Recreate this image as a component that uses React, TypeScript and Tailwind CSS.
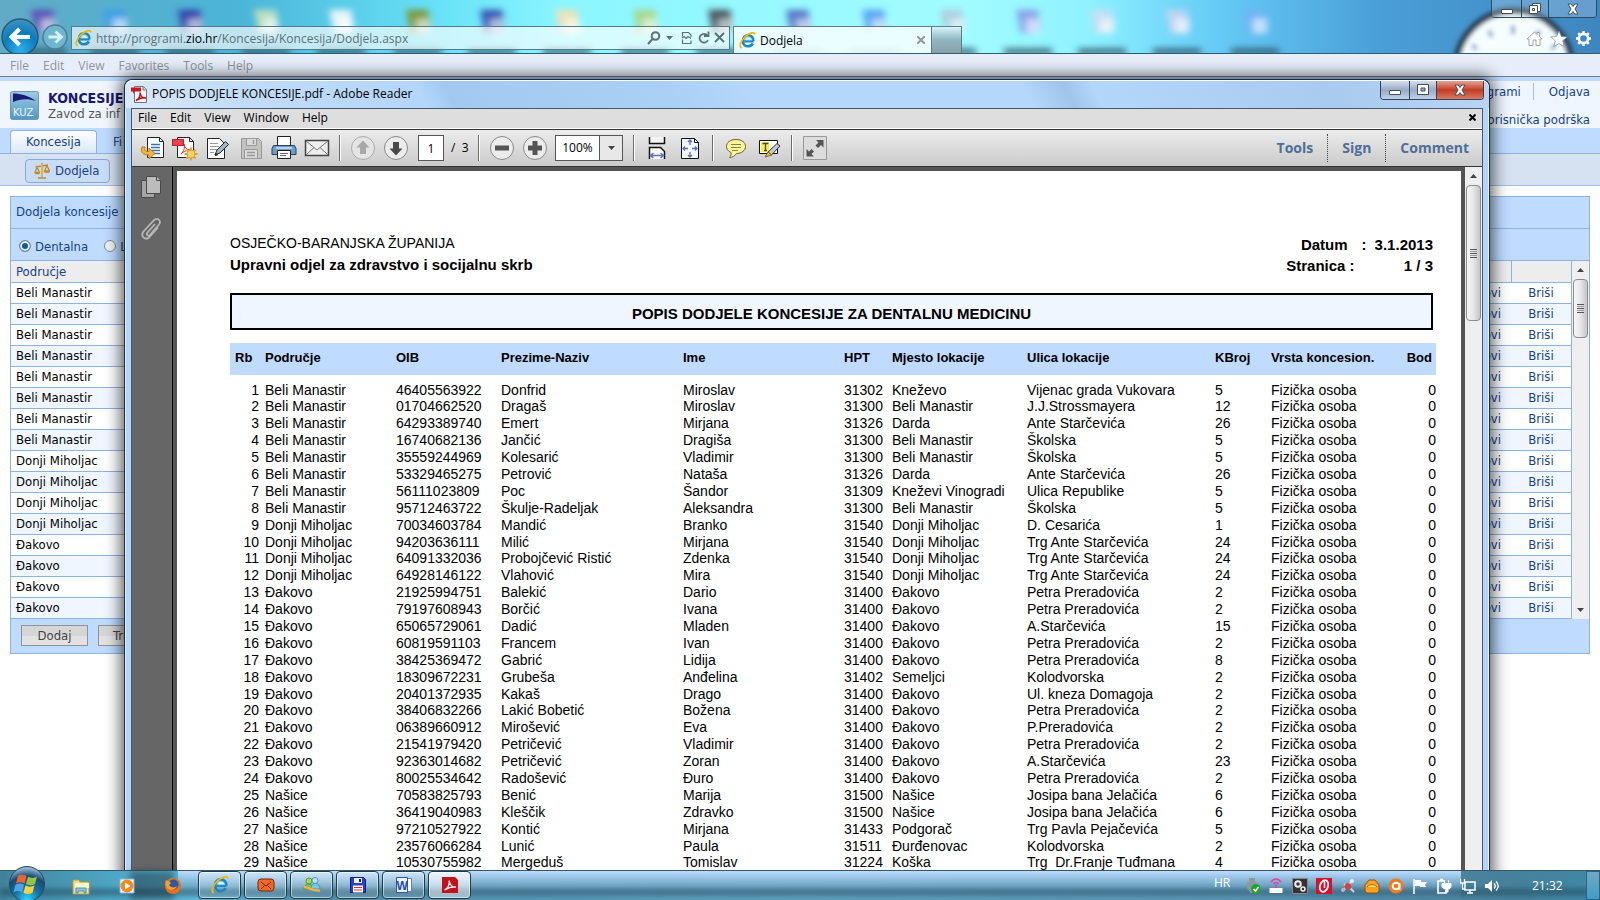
import type { ReactNode } from "react";

type Row = [string, string, string, string, string, string, string, string];

// područje, OIB, prezime, ime, HPT, mjesto, ulica, kbroj
const ROWS: Row[] = [
  ["Beli Manastir", "46405563922", "Donfrid", "Miroslav", "31302", "Kneževo", "Vijenac grada Vukovara", "5"],
  ["Beli Manastir", "01704662520", "Dragaš", "Miroslav", "31300", "Beli Manastir", "J.J.Strossmayera", "12"],
  ["Beli Manastir", "64293389740", "Emert", "Mirjana", "31326", "Darda", "Ante Starčevića", "26"],
  ["Beli Manastir", "16740682136", "Jančić", "Dragiša", "31300", "Beli Manastir", "Školska", "5"],
  ["Beli Manastir", "35559244969", "Kolesarić", "Vladimir", "31300", "Beli Manastir", "Školska", "5"],
  ["Beli Manastir", "53329465275", "Petrović", "Nataša", "31326", "Darda", "Ante Starčevića", "26"],
  ["Beli Manastir", "56111023809", "Poc", "Šandor", "31309", "Kneževi Vinogradi", "Ulica Republike", "5"],
  ["Beli Manastir", "95712463722", "Škulje-Radeljak", "Aleksandra", "31300", "Beli Manastir", "Školska", "5"],
  ["Donji Miholjac", "70034603784", "Mandić", "Branko", "31540", "Donji Miholjac", "D. Cesarića", "1"],
  ["Donji Miholjac", "94203636111", "Milić", "Mirjana", "31540", "Donji Miholjac", "Trg Ante Starčevića", "24"],
  ["Donji Miholjac", "64091332036", "Probojčević Ristić", "Zdenka", "31540", "Donji Miholjac", "Trg Ante Starčevića", "24"],
  ["Donji Miholjac", "64928146122", "Vlahović", "Mira", "31540", "Donji Miholjac", "Trg Ante Starčevića", "24"],
  ["Đakovo", "21925994751", "Balekić", "Dario", "31400", "Đakovo", "Petra Preradovića", "2"],
  ["Đakovo", "79197608943", "Borčić", "Ivana", "31400", "Đakovo", "Petra Preradovića", "2"],
  ["Đakovo", "65065729061", "Dadić", "Mladen", "31400", "Đakovo", "A.Starčevića", "15"],
  ["Đakovo", "60819591103", "Francem", "Ivan", "31400", "Đakovo", "Petra Preradovića", "2"],
  ["Đakovo", "38425369472", "Gabrić", "Lidija", "31400", "Đakovo", "Petra Preradovića", "8"],
  ["Đakovo", "18309672231", "Grubeša", "Anđelina", "31402", "Semeljci", "Kolodvorska", "2"],
  ["Đakovo", "20401372935", "Kakaš", "Drago", "31400", "Đakovo", "Ul. kneza Domagoja", "2"],
  ["Đakovo", "38406832266", "Lakić Bobetić", "Božena", "31400", "Đakovo", "Petra Preradovića", "2"],
  ["Đakovo", "06389660912", "Mirošević", "Eva", "31400", "Đakovo", "P.Preradovića", "2"],
  ["Đakovo", "21541979420", "Petričević", "Vladimir", "31400", "Đakovo", "Petra Preradovića", "2"],
  ["Đakovo", "92363014682", "Petričević", "Zoran", "31400", "Đakovo", "A.Starčevića", "23"],
  ["Đakovo", "80025534642", "Radošević", "Đuro", "31400", "Đakovo", "Petra Preradovića", "2"],
  ["Našice", "70583825793", "Benić", "Marija", "31500", "Našice", "Josipa bana Jelačića", "6"],
  ["Našice", "36419040983", "Kleščik", "Zdravko", "31500", "Našice", "Josipa bana Jelačića", "6"],
  ["Našice", "97210527922", "Kontić", "Mirjana", "31433", "Podgorač", "Trg Pavla Pejačevića", "5"],
  ["Našice", "23576066284", "Lunić", "Paula", "31511", "Đurđenovac", "Kolodvorska", "2"],
  ["Našice", "10530755982", "Mergeduš", "Tomislav", "31224", "Koška", "Trg  Dr.Franje Tuđmana", "4"],
];

const UI = "font-['Open_Sans','Noto_Sans',sans-serif]";

export default function App() {
  return (
    <div className={`relative flex h-screen flex-col overflow-hidden bg-white text-xs text-black ${UI}`}>
      <BrowserWindow />
      <ReaderWindow />
      <Taskbar />
    </div>
  );
}

/* ---------- browser ---------- */

function IeLogo({ size = 17 }: { size?: number }) {
  return (
    <svg width={size} height={size} viewBox="0 0 17 17" fill="none">
      <path d="M14.6 9.2H5.4M14.4 9.2c.2-3.4-2-6-5.3-6S3.900 5.800 3.900 9s2 5.300 5 5.300c2.300 0 3.900-.9 5-2.800" stroke="#1c86c8" strokeWidth="2.600" />
      <path d="M13.200 8.300H6c.2-1.800 1.400-3.200 3.400-3.200s3.400 1.300 3.800 3.200z" fill="#dff3fd" stroke="#5cb9ea" strokeWidth=".6" />
      <path d="M2.600 16C-.3 14.600 1.600 8.800 6.200 4.600S15.600-.6 16.200 2.500" stroke="#f5b800" strokeWidth="1.700" />
    </svg>
  );
}

// Glass behind the address bar: wallpaper with desktop icons showing through
function Glass() {
  const icons: [number, string][] = [
    [43, "#5a54b8"], [115, "#3f9fe8"], [190, "#3344aa"], [266, "#b9e0c0"], [341, "#e8f6fb"],
    [418, "#7d9a3a"], [492, "#3455b4"], [567, "#e9e3b8"], [645, "#a5d98b"], [720, "#4a5560"],
    [798, "#5577c8"], [874, "#5aa5f5"], [952, "#a8d0e0"], [1028, "#86a5e8"], [1102, "#c4dff3"],
    [1177, "#bdd3f2"], [1255, "#6fb5f5"],
  ];
  return (
    <svg className="absolute inset-0 size-full" viewBox="0 0 1600 54" preserveAspectRatio="none">
      <defs>
        <linearGradient id="sky">
          <stop offset="0" stopColor="#62aac6" />
          <stop offset=".15" stopColor="#4bb5d8" />
          <stop offset=".27" stopColor="#66e0f6" />
          <stop offset=".35" stopColor="#8af6ff" />
          <stop offset=".6" stopColor="#a2fcff" />
          <stop offset=".68" stopColor="#8ef2ff" />
          <stop offset=".76" stopColor="#66cbf6" />
          <stop offset=".86" stopColor="#4a9fd8" />
          <stop offset="1" stopColor="#3f86c0" />
        </linearGradient>
        <filter id="soft" x="-20%" y="-50%" width="140%" height="200%">
          <feGaussianBlur stdDeviation="3.500" />
        </filter>
        <filter id="soft2">
          <feGaussianBlur stdDeviation="2" />
        </filter>
      </defs>
      <rect width="1600" height="54" fill="url(#sky)" />
      <g filter="url(#soft)">
        {icons.map(([x, c]) => (
          <g key={x}>
            <path d={`M${x - 12} 10h22l3 20-8 4h-12z`} fill={c} />
            <rect x={x - 2} y="19" width="14" height="15" fill="#fff" opacity=".6" />
            <rect x={x - 24} y="49" width="48" height="7" fill="#27505f" opacity=".75" />
          </g>
        ))}
      </g>
      <g filter="url(#soft2)">
        <circle cx="1514" cy="69" r="58" fill="#f6fdff" stroke="#2c4558" strokeWidth="7" />
        <path d="M1513 26v9M1489 31l3 7M1539 31l-3 7M1472 46l5 4M1556 46l-5 4" stroke="#8aa4c0" strokeWidth="4" />
      </g>
    </svg>
  );
}

function BrowserWindow() {
  return (
    <div className="flex min-h-0 flex-1 flex-col">
      <div className="relative h-[54px] shrink-0 border-b border-[#2f5c72]">
        <Glass />
        <div className="relative flex h-full items-end">
          <button aria-label="Back" className="h-[35px] w-[39px] overflow-hidden">
            <svg width="39" height="38" viewBox="0 0 39 38">
              <defs>
                <radialGradient id="back" cx=".5" cy=".85" r=".8">
                  <stop offset="0" stopColor="#2db0ea" />
                  <stop offset=".6" stopColor="#0a7cc0" />
                  <stop offset="1" stopColor="#3a8fbe" />
                </radialGradient>
              </defs>
              <circle cx="20" cy="19" r="18" fill="url(#back)" stroke="#2b5a70" strokeWidth="1.500" />
              <path d="M30 19H12M19.500 11l-8 8 8 8" fill="none" stroke="#fff" strokeWidth="4" />
            </svg>
          </button>
          <button aria-label="Forward" className="mb-0.5 ml-[3px]">
            <svg width="27" height="27" viewBox="0 0 27 27">
              <circle cx="13" cy="13" r="12" fill="#6fb6cf" stroke="#4d7f93" strokeWidth="1.500" />
              <path d="M6.500 13h12M13.500 7.500l6 5.500-6 5.500" fill="none" stroke="#d6f0f8" strokeWidth="2.800" />
            </svg>
          </button>
          <div className="mb-[3px] ml-0.5 flex h-6 w-[659px] items-center border border-[#4f7d8c] bg-white/65 pl-[3px] pr-1 text-[#5f6f76]">
            <IeLogo />
            <div role="textbox" aria-label="Address" className="ml-1 min-w-0 flex-1 whitespace-nowrap pt-px text-xs">
              http://programi.<span className="text-black">zio.hr</span>/Koncesija/Koncesija/Dodjela.aspx
            </div>
            <svg width="78" height="14" viewBox="0 0 78 14" fill="none" stroke="#5a7276" strokeWidth="2">
              <circle cx="8.500" cy="5" r="3.800" />
              <path d="M5.500 8L1 13" />
              <path d="M19 5h7l-3.500 4z" fill="#5a7276" stroke="none" />
              <path d="M35.500 5.500v-4h6l2.500 2.500v2M35.500 8.500v4h8.500v-3M35 7l2-1.500 2 2 2-2 3 2" strokeWidth="1.200" />
              <path d="M60 4a4.400 4.400 0 1 0 1 5M61.500.5v4.500h-4.500" strokeWidth="1.800" />
              <path d="M68 2l9 9M77 2l-9 9" />
            </svg>
          </div>
          <div className="ml-[3px] flex h-[27px] w-[199px] items-center border border-b-0 border-[#5a7f8b] bg-[#f3feff]/90 pl-[5px] pr-1.5">
            <IeLogo />
            <span className="ml-1 flex-1 pt-0.5">Dodjela</span>
            <button aria-label="Close tab">
              <svg width="8" height="8" viewBox="0 0 8 8" stroke="#8f9a9d" strokeWidth="2"><path d="M0 0l8 8M8 0L0 8" /></svg>
            </button>
          </div>
          <button aria-label="New tab" className="h-[27px] w-[30px] border border-b-0 border-l-0 border-[#5a7f8b] bg-gradient-to-b from-[#d5f6fb] via-[#8fb6c0] to-[#8aa0a6]" />
          <div className="ml-auto flex h-full flex-col items-end justify-between pb-1.5">
            <div className="mr-[3px] flex h-[18px] rounded-b border border-t-0 border-[#2c4a62] text-white">
              <CaptionButton kind="min" cls="w-[29px] bg-white/20" />
              <CaptionButton kind="restore" cls="w-[27px] border-l border-[#2c4a62] bg-white/20" />
              <CaptionButton kind="close" cls="w-[48px] border-l border-[#2c4a62] bg-white/20" />
            </div>
            <svg className="mr-2" width="66" height="17" viewBox="0 0 66 17" fill="none">
              <path d="M1 9l7.500-7L11 4.500V2.500h2.500v4L16 9h-2v6.500h-4V10H7v5.500H3V9z" fill="#fff" stroke="#9aa5ad" />
              <path d="M33 1l2.300 5.500 6 .4-4.600 3.900 1.500 5.800L33 13.500l-5.200 3.100 1.500-5.800-4.600-3.900 6-.4z" fill="#fff" stroke="#7d8b96" strokeWidth=".7" />
              <circle cx="57.500" cy="8.500" r="4.600" stroke="#fff" strokeWidth="2.600" />
              <path d="M57.500 1v3M57.500 13v3M50 8.500h3M62 8.500h3M52.200 3.200l2 2M60.800 11.800l2 2M62.800 3.200l-2 2M54.200 11.800l-2 2" stroke="#fff" strokeWidth="2.400" />
            </svg>
          </div>
        </div>
      </div>

      <nav className="flex h-[23px] shrink-0 items-center gap-[14px] border-b border-[#6e7f8e] bg-[#e6eefa] pl-[10px] pt-0.5 text-[#8f949b]">
        {["File", "Edit", "View", "Favorites", "Tools", "Help"].map((m) => (
          <button key={m}>{m}</button>
        ))}
      </nav>

      <WebPage />
    </div>
  );
}

function WebPage() {
  return (
    <div className="flex min-h-0 flex-1 flex-col border-t-4 border-[#bedaff] bg-white font-['DejaVu_Sans_Condensed','DejaVu_Sans',sans-serif] text-[13px] text-[#15428b]">
      <header className="flex h-[47px] shrink-0 bg-[#eff6ff]">
        <svg className="ml-[10px] mt-[10px]" width="30" height="30" viewBox="0 0 30 30">
          <defs>
            <linearGradient id="kuz" x2="0" y2="1">
              <stop offset="0" stopColor="#9fcbe4" />
              <stop offset="1" stopColor="#4f97c4" />
            </linearGradient>
          </defs>
          <rect x=".5" y=".5" width="28" height="28" rx="2" fill="url(#kuz)" stroke="#7795aa" />
          <path d="M3 11V2.500c8 0 15 2 23 7.500-8-2.500-15-2.500-23 1z" fill="#1a1a7a" />
          <text x="3" y="24.500" fontSize="10" fill="#eaf6ff" fontFamily="DejaVu Sans">KUZ</text>
        </svg>
        <div className="ml-2 mt-[10px] leading-[15px]">
          <div className="text-[14px] font-bold text-[#1b1672]">KONCESIJE</div>
          <div className="text-[#555]">Zavod za inf</div>
        </div>
        <div className="ml-auto mr-[10px] flex flex-col items-end justify-between pt-0.5 leading-[17px]">
          <div className="flex gap-[15px]">
            <a href="#programi" className="border-r border-[#a9bdd8] pr-3">Programi</a>
            <a href="#odjava">Odjava</a>
          </div>
          <a href="#podrska">Korisnička podrška</a>
        </div>
      </header>
      <div className="flex h-[26px] shrink-0 items-end border-b border-[#8db2e3] bg-[#bfdbff] pl-[10px]">
        <button className="h-[23px] w-[87px] rounded-t border border-b-0 border-[#8db2e3] bg-gradient-to-b from-white to-[#dbe8fa]">Koncesija</button>
        <button className="ml-4 h-[23px]">Fi</button>
      </div>
      <div className="flex h-8 shrink-0 items-center border-b border-[#9dbdec] bg-[#d6e1f1] pl-[25px] pt-0.5">
        <button className="flex h-6 w-[85px] items-center gap-[5px] rounded-sm border border-[#86a9db] bg-[#c9dcf5] pl-2">
          <svg width="16" height="16" viewBox="0 0 16 16" fill="none" stroke="#c08a2c" strokeWidth="1.300">
            <path d="M8 0v14M4 15h8M1.500 4L14 2M3 4L1 9.500h4.500zM13 2.500L10.500 8h5zM1 10.500h4.500M10.500 9h5" />
            <path d="M8 1v13" strokeWidth="2" stroke="#e0b450" />
          </svg>
          Dodjela
        </button>
      </div>

      <section className="mx-[10px] mt-[10px] border border-[#8db2e3] bg-[#bfdbff]">
        <h2 className="flex h-8 items-center border-b border-[#8db2e3] pb-0.5 pl-[5px]">Dodjela koncesije</h2>
        <div className="flex h-8 items-center gap-[16px] border-b border-[#8db2e3] pl-2 pt-1">
          <label className="flex items-center gap-1"><Radio checked />Dentalna</label>
          <label className="flex items-center gap-1"><Radio />L</label>
        </div>
        <div className="flex bg-[#ededed]">
          <table className="flex-1 table-fixed border-collapse">
            <thead>
              <tr className="h-[21px] border-b border-[#8db2e3] bg-[#ededed] text-left">
                <th className="pl-[5px] font-normal">Područje</th>
                <th className="w-[120px] border-r border-[#8db2e3]" />
                <th className="w-[60px]" />
              </tr>
            </thead>
            <tbody>
              {ROWS.slice(0, 16).map((r, i) => (
                <tr key={r[1]} className="h-[21px] border-b border-[#8db2e3] odd:bg-white even:bg-[#f0f6ff]">
                  <td className="pl-[5px] leading-5 text-black">{r[0]}</td>
                  <td className="pr-[10px] text-right leading-5"><a href={`#obnovi-${i}`}>Obnovi</a></td>
                  <td className="text-center leading-5"><a href={`#brisi-${i}`}>Briši</a></td>
                </tr>
              ))}
            </tbody>
          </table>
          <div className="flex w-[18px] flex-col items-center border-l border-[#8db2e3] bg-[#efefef]">
            <Arrow up />
            <Thumb cls="h-[59px]" />
            <div className="flex-1" />
            <Arrow />
          </div>
        </div>
        <div className="flex h-[34px] items-center gap-[10px] pl-[10px] text-[#444]">
          <button className="h-[21px] w-[67px] border border-[#8f9296] bg-[linear-gradient(#d6d6d6_0_55%,#e2e2e2_55%)]">Dodaj</button>
          <button className="h-[21px] w-[67px] border border-[#8f9296] bg-[linear-gradient(#d6d6d6_0_55%,#e2e2e2_55%)] pl-[14px] text-left">Traži</button>
        </div>
      </section>
    </div>
  );
}

function Radio({ checked = false }: { checked?: boolean }) {
  return (
    <input
      type="radio"
      name="vrsta"
      defaultChecked={checked}
      className="size-3 appearance-none rounded-full border border-[#7d8a96] bg-[#eef1f4] ring-inset checked:bg-[#0d5c8f] checked:ring-2 checked:ring-[#e4edf3]"
    />
  );
}

function Arrow({ up = false }: { up?: boolean }) {
  return (
    <button aria-label={up ? "Scroll up" : "Scroll down"} className="flex h-[18px] w-full items-center justify-center">
      <svg width="7" height="4" viewBox="0 0 7 4" fill="#444">
        <path d={up ? "M0 4L3.500 0 7 4z" : "M0 0l3.500 4L7 0z"} />
      </svg>
    </button>
  );
}

function Thumb({ cls }: { cls: string }) {
  return (
    <div className={`flex w-[15px] flex-col items-center justify-center gap-px rounded-sm border border-[#8c8c8c] bg-gradient-to-r from-[#f7f7f7] via-[#e6e6e6] to-[#c3c5c8] ${cls}`}>
      <div className="h-px w-[7px] bg-[#555]" />
      <div className="h-px w-[7px] bg-[#999]" />
      <div className="h-px w-[7px] bg-[#555]" />
      <div className="h-px w-[7px] bg-[#999]" />
      <div className="h-px w-[7px] bg-[#555]" />
    </div>
  );
}

function CaptionButton({ kind, cls }: { kind: "min" | "max" | "restore" | "close"; cls: string }) {
  return (
    <button aria-label={kind} className={`flex items-center justify-center ${cls}`}>
      <svg width="14" height="12" viewBox="0 0 14 12" fill="#fff" stroke="#454c5c">
        {kind === "min" && <rect x="1.500" y="6.500" width="11" height="4" rx=".5" />}
        {kind === "max" && <path d="M1.500.5h11v10h-11zM5 4v3h4V4z" fillRule="evenodd" />}
        {kind === "restore" && (
          <>
            <path d="M4.500.5h8v8h-8z" />
            <path d="M1.500 2.500h8v8h-8zM4.500 5.500v2h2v-2z" fillRule="evenodd" />
          </>
        )}
        {kind === "close" && <path d="M2 1h3.200L7 3.500 8.800 1H12L9 6l3 5H8.800L7 8.500 5.200 11H2l3-5z" />}
      </svg>
    </button>
  );
}

/* ---------- reader ---------- */

function ReaderWindow() {
  return (
    <div className="absolute bottom-0 left-[124px] right-[110px] top-[79px] flex flex-col rounded-t-lg border border-b-0 border-[#1c2c3c] bg-[#b4d5fa] px-[6px] shadow-[0_0_16px_3px_rgba(0,0,0,0.65)] ring-1 ring-inset ring-white/70">
      <div className="-mx-[6px] flex h-7 shrink-0 rounded-t-lg border-t border-white bg-[linear-gradient(62deg,#dceafa_0,#c3dcf7_8%,#b4d6fb_22%,#a3c9f0_24%,#abd0f5_40%,#b4d7fb_46%,#b4d7fb_66%,#a0c4ea_69%,#b3d6fb_71%,#a9cbef_88%,#b8d5f5_100%)] pl-[6px] pr-[5px]">
        <svg className="mt-[5px]" width="17" height="17" viewBox="0 0 17 17">
          <path d="M3.500.5h9l3 3v13h-12z" fill="#f4f4f4" stroke="#777" />
          <path d="M12 .5V4h3.500" fill="#ddd" stroke="#777" />
          <path d="M0 1.500h10v4H3.500L2 8V5.500H0z" fill="#c8161d" />
          <path d="M5 14.500c3-1.500 4.500-5 4-8 .5 4 3 6 6 5.500-4-1-7 .5-10 2.500z" fill="none" stroke="#b5121b" strokeWidth="1.500" />
        </svg>
        <span className="ml-1 mt-[3px] leading-5">POPIS DODJELE KONCESIJE.pdf - Adobe Reader</span>
        <div className="ml-auto flex h-[19px] overflow-hidden rounded-b border border-t-0 border-[#33435c]">
          <CaptionButton kind="min" cls="w-[28px] bg-gradient-to-b from-[#d5dfeb] via-[#98aac6] to-[#c0d3ea]" />
          <CaptionButton kind="max" cls="w-[27px] border-l border-[#33435c] bg-gradient-to-b from-[#d5dfeb] via-[#98aac6] to-[#c0d3ea]" />
          <CaptionButton kind="close" cls="w-[47px] border-l border-[#33435c] bg-gradient-to-b from-[#e5a193] via-[#c23a23] to-[#d9785f]" />
        </div>
      </div>

      <div className="flex min-h-0 flex-1 flex-col border-x border-t border-[#46586e] bg-[#dedede]">
        <nav className="flex h-5 shrink-0 items-center gap-[13px] border-b border-b-white pb-0.5 pl-[6px] pr-[6px]">
          {["File", "Edit", "View", "Window", "Help"].map((m) => (
            <button key={m}>{m}</button>
          ))}
          <button aria-label="Close document" className="ml-auto">
            <svg width="7" height="7" viewBox="0 0 7 7" stroke="#000" strokeWidth="2"><path d="M.5.5l6 6M6.500.5l-6 6" /></svg>
          </button>
        </nav>
        <Toolbar />
        <div className="flex min-h-0 flex-1 bg-[#545454]">
          <aside className="flex w-[41px] shrink-0 flex-col items-center border-r border-black bg-[#666] pr-0.5">
            <button aria-label="Page thumbnails" className="mt-2">
              <svg width="22" height="24" viewBox="0 0 22 24" fill="#bcbcbc" stroke="#4a4a4a">
                <path d="M1.500 5.500h13v17h-13z" fill="#a5a5a5" />
                <path d="M6.500 1.500h10l4 4v13h-14z" />
                <path d="M16.500 1.500v4h4" />
              </svg>
            </button>
            <button aria-label="Attachments" className="mt-[18px]">
              <svg width="22" height="24" viewBox="0 0 22 24" fill="none" stroke="#b5b5b5" strokeWidth="1.800">
                <path d="M15 7L7.500 15.500c-1.800 2.300.8 4 2.500 2.300l9-10.300c2.800-4-2-7.500-5-4.300L3.500 14.500c-3.500 5 2 9.500 6 5.500l8.500-9.500" />
              </svg>
            </button>
          </aside>
          <div className="min-w-0 flex-1 overflow-hidden px-[4px] pt-1">
            <Document />
          </div>
          <div className="flex w-[17px] shrink-0 flex-col items-center bg-[#efefef]">
            <Arrow up />
            <Thumb cls="h-[136px]" />
          </div>
        </div>
      </div>
    </div>
  );
}

function Tool({ label, children }: { label: string; children: ReactNode }) {
  return (
    <button aria-label={label} className="flex w-[33px] shrink-0 justify-center">
      <svg width="26" height="26" viewBox="0 0 26 26" fill="none">{children}</svg>
    </button>
  );
}

function Sep() {
  return (
    <div className="flex w-[13px] shrink-0 justify-center">
      <div className="h-[26px] w-0.5 border-l border-r border-[#6b6b6b] border-r-white" />
    </div>
  );
}

function Toolbar() {
  return (
    <div className="flex h-[38px] shrink-0 items-center border-y border-[#333] bg-gradient-to-b from-[#ececec] to-[#cbcbcb] pl-[3px]">
      <Tool label="Open">
        <path d="M8.500 2.500h12l4 4v16h-16z" fill="#fff" stroke="#222" />
        <path d="M20.500 2.500v4h4" stroke="#222" />
        <path d="M12 9.500h9M12 12.500h9M12 15.500h9M14 18.500h7" stroke="#3a6fc0" strokeWidth="1.500" />
        <path d="M3 12c-2 5 1 8 7 8v4l6-5.500-6-5.500v3.500c-4 0-5-1.500-4-4.500z" fill="#f0b440" stroke="#b77c14" />
      </Tool>
      <Tool label="Create PDF">
        <path d="M5.500 2.500h12l4 4v16h-16z" fill="#fff" stroke="#222" />
        <path d="M17.500 2.500v4h4" stroke="#222" />
        <path d="M9 19c3-3 4-6 3-10 1 4 3 6 6 6-4 0-7 2-9 4z" stroke="#d23" />
        <rect x=".5" y="4.500" width="11" height="6" fill="#e8434a" stroke="#c11f28" />
        <path d="M19 12.500v13M12.500 19h13M14.500 14.500l9 9M23.500 14.500l-9 9" stroke="#d9a236" strokeWidth="2.200" />
        <circle cx="19" cy="19" r="4" fill="#f7cf6c" stroke="#d9a236" />
      </Tool>
      <Tool label="Sign document">
        <path d="M2.500 3.500h12l5 5v15h-17z" fill="#fff" stroke="#222" />
        <path d="M5 8.500h8M5 11.500h9M5 14.500h7M5 17.500h4" stroke="#999" />
        <path d="M10 20l2-5 8.500-8.500 3 3L15 18z" fill="#9fb6cb" stroke="#222" />
        <path d="M10 20l2.500-.8" stroke="#222" strokeWidth="2" />
      </Tool>
      <Tool label="Save">
        <path d="M3.500 3.500h17l3 3v17h-20z" fill="#c3c3c3" stroke="#999" />
        <path d="M8.500 3.500h10v7h-10zM6.500 14.500h13v9h-13z" fill="#dadada" stroke="#999" />
        <path d="M15.500 5v4M9 17.500h8M9 20.500h8" stroke="#999" strokeWidth="1.500" />
      </Tool>
      <Tool label="Print">
        <path d="M6.500 1.500h13v9h-13z" fill="#fff" stroke="#222" />
        <path d="M2.500 10.500h21l1.500 3v6H1v-6z" fill="#6e9cc9" stroke="#23425f" />
        <path d="M5 13h16" stroke="#b9d5ee" strokeWidth="2" />
        <path d="M6.500 15.500h13v8h-13z" fill="#fff" stroke="#222" />
        <path d="M9 18.500h8M9 20.500h6" stroke="#666" />
      </Tool>
      <Tool label="Email">
        <path d="M1.500 5.500h23v15h-23z" fill="#eee" stroke="#444" strokeWidth="1.500" />
        <path d="M2 6l11 9 11-9M2 20l8-7.500M24 20l-8-7.500" stroke="#777" />
      </Tool>
      <Sep />
      <Tool label="Previous page">
        <circle cx="13" cy="13" r="11.500" fill="#e4e4e4" stroke="#aaa" />
        <path d="M13 5.500l6.500 7H16V19h-6v-6.500H6.500z" fill="#a8a8a8" />
      </Tool>
      <Tool label="Next page">
        <circle cx="13" cy="13" r="11.500" fill="#ececec" stroke="#888" />
        <path d="M13 20.500l-6.500-7H10V7h6v6.500h3.500z" fill="#484848" />
      </Tool>
      <input aria-label="Page" defaultValue="1" className="ml-[6px] mr-[5px] h-[26px] w-[26px] border border-[#555] bg-white text-center" />
      <span className="w-[23px] pl-0.5">/&nbsp; 3</span>
      <Sep />
      <Tool label="Zoom out">
        <circle cx="13" cy="13" r="11.500" fill="#ececec" stroke="#888" />
        <path d="M6 10.500h14v5H6z" fill="#555" />
      </Tool>
      <Tool label="Zoom in">
        <circle cx="13" cy="13" r="11.500" fill="#ececec" stroke="#888" />
        <path d="M10.500 6h5v4.500H20v5h-4.500V20h-5v-4.500H6v-5h4.500z" fill="#555" />
      </Tool>
      <div className="mx-1 flex h-[26px] w-[68px] border border-[#555] bg-white">
        <input aria-label="Zoom" defaultValue="100%" className="w-[44px] border-r border-[#555] text-center" />
        <button aria-label="Zoom levels" className="flex flex-1 items-center justify-center bg-[#e8e8e8]">
          <svg width="7" height="4" viewBox="0 0 7 4" fill="#444"><path d="M0 0h7L3.500 4z" /></svg>
        </button>
      </div>
      <Sep />
      <Tool label="Fit width">
        <path d="M5.500 2v6.500h15V2" fill="#f3f3f3" stroke="#111" strokeWidth="1.500" />
        <path d="M5.500 24V12.500h11l4 4V24" fill="#fff" stroke="#111" strokeWidth="1.500" />
        <path d="M7 20.500h12M9.500 18l-3 2.500 3 2.500M16.500 18l3 2.500-3 2.500" stroke="#5a70b8" strokeWidth="1.500" />
      </Tool>
      <Tool label="Fit page">
        <path d="M4.500 3.500h13l4 4v16h-17z" fill="#f4f6ff" stroke="#111" />
        <path d="M17.500 3.500v4h4" stroke="#111" />
        <path d="M13 5v5M13 17v5M6 13.500h5M15 13.500h5M11 7l2-2 2 2M11 20l2 2 2-2M8 11.500l-2 2 2 2M18 11.500l2 2-2 2" stroke="#5a70b8" strokeWidth="1.300" />
      </Tool>
      <Sep />
      <Tool label="Add comment">
        <path d="M13 4.500c6 0 9.500 3 9.500 7s-4 7-9 7c-2 2.500-4 4-7 4 1.500-1.500 2-3 1.500-5-3-1.500-4.500-3.500-4.500-6 0-4 3.500-7 9.500-7z" fill="#fdf59a" stroke="#6b6330" />
        <path d="M8 9.500h10M8 12.500h10M9 15.500h6" stroke="#8a8140" />
      </Tool>
      <Tool label="Highlight text">
        <path d="M3.500 5.500h18v13h-18z" fill="#fff" stroke="#111" />
        <path d="M5 7h8v10H5z" fill="#ffef3a" />
        <path d="M6.500 8.500h6M9.500 8.500v7M8 15.500h3" stroke="#444" strokeWidth="1.300" />
        <path d="M12 17l9-8.500 3 2.500-8.500 9z" fill="#c5c9cc" stroke="#333" />
        <path d="M12 17l-3 5 6.500-2z" fill="#e3cf3c" stroke="#776a10" />
      </Tool>
      <Sep />
      <Tool label="Read mode">
        <path d="M1.500 1.500h23v23h-23z" fill="#dcdcdc" stroke="#999" />
        <path d="M14 5h7.500v7.500L19 10l-3 3-2.500-2.500 3-3zM12 21.500H4.500V14L7 16.500l2.500-2.500 2.500 2.500L9.500 19z" fill="#555" />
      </Tool>
      <div className="ml-auto flex h-[28px] items-center pr-[13px] text-[14px] font-bold text-[#4f6f98]">
        <button className="pr-[14px]">Tools</button>
        <button className="h-full border-l border-dotted border-[#444] px-[14px]">Sign</button>
        <button className="h-full border-l border-dotted border-[#444] pl-[14px]">Comment</button>
      </div>
    </div>
  );
}

function Document() {
  return (
    <article className="h-full bg-white pl-[53px] pr-[25px] pt-[61px] font-['Liberation_Sans',Arial,sans-serif] text-[14px]">
      <header className="flex justify-between pr-[3px]">
        <div className="leading-[22px]">
          <div>OSJEČKO-BARANJSKA ŽUPANIJA</div>
          <div className="text-[15px] font-bold">Upravni odjel za zdravstvo i socijalnu skrb</div>
        </div>
        <dl className="grid grid-cols-[auto_auto] pt-0.5 text-right text-[15px] font-bold leading-[21px]">
          <dt>Datum<span className="pl-[14px]">:</span></dt>
          <dd className="pl-[8px]">3.1.2013</dd>
          <dt className="pr-3">Stranica :</dt>
          <dd>1 / 3</dd>
        </dl>
      </header>
      <h1 className="mr-[3px] mt-[17px] flex h-[37px] items-center justify-center border-2 border-black bg-[#eff6ff] pt-1 text-[15px] font-bold">
        POPIS DODJELE KONCESIJE ZA DENTALNU MEDICINU
      </h1>
      <table className="mt-[13px] w-full table-fixed whitespace-pre text-left leading-4">
        <thead>
          <tr className="h-8 bg-[#bfdbff] text-[13px] [&>th]:pb-0.5">
            <th className="w-[35px] pl-[5px]">Rb</th>
            <th className="w-[131px]">Područje</th>
            <th className="w-[105px]">OIB</th>
            <th className="w-[182px]">Prezime-Naziv</th>
            <th className="w-[161px]">Ime</th>
            <th className="w-[48px]">HPT</th>
            <th className="w-[135px]">Mjesto lokacije</th>
            <th className="w-[188px]">Ulica lokacije</th>
            <th className="w-[56px]">KBroj</th>
            <th className="w-[120px]">Vrsta koncesion.</th>
            <th className="pr-1 text-right">Bod</th>
          </tr>
        </thead>
        <tbody className="before:block before:h-[7px]">
          {ROWS.map((r, i) => (
            <tr key={r[1]} className={`align-top ${i % 9 === 0 ? "h-4" : "h-[17px]"}`}>
              <td className="pr-1.5 text-right">{i + 1}</td>
              {r.map((cell, j) => (
                <td key={j}>{cell}</td>
              ))}
              <td>Fizička osoba</td>
              <td className="text-right">0</td>
            </tr>
          ))}
        </tbody>
      </table>
    </article>
  );
}

/* ---------- taskbar ---------- */

function Taskbar() {
  return (
    <footer className="absolute inset-x-0 bottom-0 flex h-[30px] border-t border-[#33566b] bg-[linear-gradient(90deg,#3f829a_0,#4fa5c4_7%,#5cb8d8_12%,#4c8fae_20%,#5b9dba_50%,#5591b0_80%,#47809a_94%,#3f88a5_100%)]">
      <div className="absolute inset-y-0 left-[178px] right-[139px] bg-gradient-to-b from-[#bcdcff] via-[#7fb0d0]/80 via-45% to-transparent" />
      <div className="absolute inset-x-0 bottom-1 h-2 bg-[#1d4556]/45 blur-[2px]" />
      <div className="absolute inset-y-0 left-[130px] w-[44px] bg-[#20303a]/50 blur-[3px]" />
      <div className="relative flex flex-1 items-stretch">
        <button aria-label="Start" className="-mt-[6px] ml-2 mr-[6px] w-[38px]">
          <svg width="38" height="36" viewBox="0 0 38 36">
            <defs>
              <radialGradient id="orb" cx=".5" cy=".95" r=".9">
                <stop offset="0" stopColor="#2fd8ff" />
                <stop offset=".4" stopColor="#1673a8" />
                <stop offset=".75" stopColor="#1b4a74" />
                <stop offset="1" stopColor="#8fb6cc" />
              </radialGradient>
            </defs>
            <circle cx="19" cy="19" r="17.500" fill="url(#orb)" stroke="#224a60" />
            <path d="M10 11c3-2 6-1.500 8.500 0l-2 7.500c-2.500-1.500-5.500-2-8.500 0z" fill="#f0622e" />
            <path d="M20 11.800c3 1.500 6 1.700 9-.3l-2 7.500c-3 2-6 1.500-9 0z" fill="#93c83e" />
            <path d="M7.500 19.800c3-2 6-1.500 8.500 0l-2 7.500c-2.500-1.500-5.500-2-8.500 0z" fill="#4da5e8" />
            <path d="M17.500 20.500c3 1.500 6 1.700 9-.3l-2 7.500c-3 2-6 1.500-9 0z" fill="#fbd23c" />
          </svg>
        </button>
        <Pinned label="Explorer">
          <path d="M1 3h6l1 2h9v12H1z" fill="#f2dd8c" stroke="#b89a45" />
          <path d="M3 6h14v5H3z" fill="#fff6c8" />
          <path d="M4 11h10v5h-2v-2H6v2H4z" fill="#86c7ea" stroke="#4b92bd" />
        </Pinned>
        <Pinned label="Media Player">
          <path d="M2 2h14v14H2z" fill="#f8fbff" stroke="#7fb5de" />
          <circle cx="9" cy="9" r="6.500" fill="#f58a1c" />
          <path d="M7 5.500l5.500 3.500L7 12.500z" fill="#fff" />
        </Pinned>
        <Pinned label="Firefox">
          <circle cx="9" cy="9" r="8" fill="#e8701a" />
          <circle cx="9.500" cy="7.500" r="5" fill="#2a5aa5" />
          <path d="M2 3c1 1 3 1 5 3l-2 2c2 3 6 3 8 1-1 4-7 5-10 2C1 8 1 5 2 3z" fill="#f8a02c" />
        </Pinned>
        <div className="ml-2 flex gap-[3px]">
          <Task label="Internet Explorer"><IeLogo size={18} /></Task>
          <Task label="Mail">
            <svg width="18" height="18" viewBox="0 0 18 18">
              <rect x="1" y="3" width="16" height="12" rx="3" fill="#ef6a25" stroke="#7a2408" />
              <path d="M4 6l5 4 5-4M4 13l3.500-3.500M14 13l-3.500-3.500" stroke="#7a2408" fill="none" />
            </svg>
          </Task>
          <Task label="Messenger">
            <svg width="18" height="18" viewBox="0 0 18 18">
              <circle cx="6" cy="5" r="3" fill="#a5d85c" stroke="#4f8a24" strokeWidth=".8" />
              <circle cx="12" cy="4.500" r="3" fill="#b5e2f8" stroke="#3f87b5" strokeWidth=".8" />
              <path d="M1 13c0-4 3-5 5-5s4 2 4 5z" fill="#7cc443" stroke="#4f8a24" strokeWidth=".8" />
              <path d="M8 13c0-4 2-5.500 4.500-5.500S17 9.500 17 13z" fill="#7cc4ec" stroke="#3f87b5" strokeWidth=".8" />
              <path d="M1 11c5 0 8 4.500 16 3.500" stroke="#f2b33a" strokeWidth="2.500" fill="none" />
            </svg>
          </Task>
          <Task label="Total Commander">
            <svg width="18" height="18" viewBox="0 0 18 18">
              <path d="M1.500 1.500h13l2 2v13h-15z" fill="#2a3fc8" stroke="#0f1c80" />
              <path d="M5 2h8v5H5z" fill="#eef" /><path d="M10 3h2v3h-2z" fill="#223" />
              <path d="M4 9.500h10v7H4z" fill="#fff" />
              <path d="M5 11.500h8M5 14h8" stroke="#e03030" />
            </svg>
          </Task>
          <Task label="Word">
            <svg width="18" height="18" viewBox="0 0 18 18">
              <path d="M6 2.500h10.500v13H6z" fill="#fff" stroke="#5a82c0" />
              <path d="M1.500 1.500h11v15h-11z" fill="#e9f2ff" stroke="#2a5aa8" />
              <text x="1.500" y="13.500" fontSize="12" fontWeight="bold" fill="#1f4fa5" fontFamily="Liberation Sans">W</text>
            </svg>
          </Task>
          <Task label="Adobe Reader" active>
            <svg width="18" height="18" viewBox="0 0 18 18">
              <path d="M1 1h13l3 3v13H1z" fill="#c3101a" />
              <path d="M3.500 14c3-1.500 5-5 4.700-9.500C9 9.500 11 11.500 15 11c-4-.5-8 1-11.500 3z" stroke="#fff" fill="none" strokeWidth="1.200" />
            </svg>
          </Task>
        </div>
        <div className="ml-auto flex text-white">
          <span className="w-[26px] pt-0.5 leading-5">HR</span>
          <Tray>
            <path d="M5 0h6v4H5zM3 4h10v5c0 3-3 3-3 6H6c0-3-3-3-3-6z" fill="#8d979e" />
            <circle cx="12" cy="11" r="5" fill="#1fa32b" /><path d="M9.500 11l2 2 3-4" stroke="#fff" strokeWidth="1.500" fill="none" />
          </Tray>
          <Tray>
            <path d="M1.500 10h13v5h-13z" fill="#fff" />
            <path d="M3 4c3-4 7-4 10 0M5.500 6c1.500-2 3.500-2 5 0M8 6.500V10" stroke="#f03a9a" strokeWidth="1.600" fill="none" />
          </Tray>
          <Tray>
            <path d="M.5.5h15v15H.5z" fill="#333" stroke="#888" />
            <circle cx="6" cy="6" r="2.800" stroke="#eee" strokeWidth="2" fill="none" />
            <circle cx="11" cy="11" r="2" stroke="#eee" strokeWidth="1.600" fill="none" />
          </Tray>
          <Tray>
            <path d="M0 0h16v16H0z" fill="#d8102a" />
            <ellipse cx="8" cy="8" rx="4" ry="6" fill="none" stroke="#fff" strokeWidth="1.700" transform="rotate(20 8 8)" />
            <path d="M8.500 3v7" stroke="#fff" strokeWidth="1.500" />
          </Tray>
          <Tray>
            <path d="M2 13l5-4M11 3l-2 4M4 6l4 3M10 10l4 4" stroke="#c9d3da" strokeWidth="2" />
            <circle cx="8" cy="8.500" r="3.200" fill="#d8413a" /><circle cx="12" cy="3" r="2" fill="#e9eef2" /><circle cx="3" cy="12" r="2" fill="#aeb9c0" />
          </Tray>
          <Tray>
            <path d="M1 7l4-5h6l4 5v6l-2 2H3l-2-2z" fill="#f8a51c" stroke="#a24a08" />
            <path d="M3 9c3-3 7-3 10 0" fill="#ffe28a" stroke="#b35c0c" />
          </Tray>
          <Tray>
            <circle cx="8" cy="8" r="7.500" fill="#f47a1a" />
            <circle cx="8" cy="8" r="3.300" fill="none" stroke="#fff" strokeWidth="2" /><path d="M11.500 5v7" stroke="#fff" strokeWidth="1.800" />
          </Tray>
          <Tray>
            <path d="M2 1v15" stroke="#fff" strokeWidth="1.500" /><path d="M3 2h6v2h6l-2 3 1 2H8V8H3z" fill="#fff" />
          </Tray>
          <Tray>
            <path d="M8 3H2v12h8v-3M4 1.500h3" stroke="#fff" strokeWidth="1.600" fill="none" />
            <path d="M6 5.500h9v2.500c0 2-1.500 3-3 3V14h-2v-3C8 11 6 10 6 8zM8.500 2v4M12.500 2v4" fill="#fff" stroke="#fff" />
          </Tray>
          <Tray>
            <path d="M5 4h10v8H5zM7 15h6M10 12v3" stroke="#fff" strokeWidth="1.500" fill="none" />
            <path d="M.5 1v4h4V1M2.500 5v6H5" stroke="#fff" strokeWidth="1.300" fill="none" />
          </Tray>
          <Tray>
            <path d="M1 6h3l4-4v12l-4-4H1z" fill="#fff" />
            <path d="M10 5.500c1.500 1.500 1.500 3.500 0 5M12 3.500c3 3 3 6 0 9" stroke="#fff" strokeWidth="1.300" fill="none" />
          </Tray>
          <time className="ml-[28px] w-[54px] pt-[5px] leading-5">21:32</time>
          <button aria-label="Show desktop" className="w-[14px] border border-[#2c6480] bg-gradient-to-b from-[#6fa9c3] to-[#3f9cc4]" />
        </div>
      </div>
    </footer>
  );
}

function Pinned({ label, children }: { label: string; children: ReactNode }) {
  return (
    <button aria-label={label} className="flex w-[46px] items-center justify-center pl-3">
      <svg width="18" height="18" viewBox="0 0 18 18">{children}</svg>
    </button>
  );
}

function Task({ label, active = false, children }: { label: string; active?: boolean; children: ReactNode }) {
  return (
    <button
      aria-label={label}
      className={`mb-px flex w-[43px] items-center justify-center rounded-sm border border-[#1f3c4d] ring-1 ring-inset ring-white/50 ${
        active ? "bg-gradient-to-b from-white/75 to-white/45" : "bg-gradient-to-b from-white/35 to-white/10"
      }`}
    >
      {children}
    </button>
  );
}

function Tray({ children }: { children: ReactNode }) {
  return (
    <span className="flex w-6 items-center justify-center">
      <svg width="16" height="16" viewBox="0 0 16 16">{children}</svg>
    </span>
  );
}
